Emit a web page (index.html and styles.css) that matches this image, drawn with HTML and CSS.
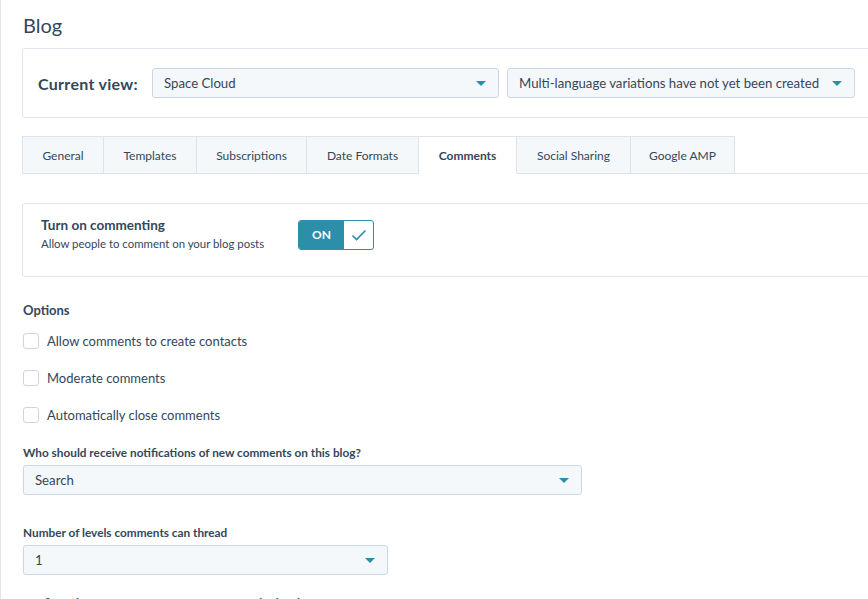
FILE: index.html
```html
<!DOCTYPE html>
<html lang="en">
<head>
    <meta charset="UTF-8">
    <title>Blog settings</title>
    <link rel="stylesheet" href="styles.css">
</head>
<body>
    <div class="page">
        <h1 class="title">Blog</h1>

        <div class="view-box">
            <span class="view-label">Current view:</span>
            <div class="select select-blog">Space Cloud <span class="caret"></span></div>
            <div class="select select-lang">Multi-language variations have not yet been created <span class="caret"></span></div>
        </div>

        <div class="tabs">
            <div class="tab">General</div>
            <div class="tab">Templates</div>
            <div class="tab">Subscriptions</div>
            <div class="tab">Date Formats</div>
            <div class="tab active">Comments</div>
            <div class="tab">Social Sharing</div>
            <div class="tab">Google AMP</div>
            <div class="tab-rest"></div>
        </div>

        <div class="card">
            <div class="card-text">
                <div class="card-title">Turn on commenting</div>
                <div class="card-desc">Allow people to comment on your blog posts</div>
            </div>
            <div class="toggle">
                <span class="toggle-on">ON</span>
                <span class="toggle-check">
                    <svg width="16" height="12" viewBox="0 0 16 12"><path d="M1.5 6.5 L5.5 10.5 L14.5 1.5" fill="none" stroke="#2d8eaa" stroke-width="1.6"/></svg>
                </span>
            </div>
        </div>

        <h3 class="section">Options</h3>
        <label class="check"><span class="box"></span>Allow comments to create contacts</label>
        <label class="check"><span class="box"></span>Moderate comments</label>
        <label class="check"><span class="box"></span>Automatically close comments</label>

        <div class="field">
            <div class="field-label">Who should receive notifications of new comments on this blog?</div>
            <div class="select select-search">Search <span class="caret"></span></div>
        </div>

        <div class="field">
            <div class="field-label">Number of levels comments can thread</div>
            <div class="select select-levels">1 <span class="caret"></span></div>
        </div>

        <div class="field">
            <div class="field-label">Confirmation message after comments are submitted</div>
        </div>
    </div>
</body>
</html>
```

FILE: styles.css
```css
body {
    margin: 0;
    font-family: Lato, "Open Sans", Arial, sans-serif;
    color: #33475b;
    background: #fff;
    overflow: hidden;
    border-left: 1px solid #e3e7ec;
    height: 599px;
}
.page {
    padding: 12px 0 0 21px;
    width: 900px;
}
.title {
    margin: 0 0 0 1px;
    font-size: 20px;
    font-weight: 400;
    line-height: 26px;
}
.view-box {
    margin-top: 10px;
    height: 68px;
    border: 1px solid #e1e6ec;
    border-radius: 3px;
    display: flex;
    align-items: center;
    padding-left: 15px;
}
.view-label {
    font-size: 16px;
    font-weight: 700;
    width: 114px;
    letter-spacing: 0.3px;
}
.select {
    position: relative;
    box-sizing: border-box;
    height: 30px;
    background: #f5f8fa;
    border: 1px solid #cbd6e2;
    border-radius: 3px;
    font-size: 13.2px;
    line-height: 28px;
    padding-left: 11px;
    white-space: nowrap;
}
.caret {
    position: absolute;
    right: 12px;
    top: 12px;
    border-left: 5px solid transparent;
    border-right: 5px solid transparent;
    border-top: 5px solid #2d8eaa;
}
.select-blog {
    width: 347px;
}
.select-lang {
    width: 348px;
    margin-left: 8px;
}
.tabs {
    display: flex;
    margin-top: 18px;
    height: 38px;
}
.tab {
    box-sizing: border-box;
    height: 38px;
    background: #f5f8fa;
    border: 1px solid #dfe3eb;
    border-left: none;
    font-size: 12px;
    line-height: 37px;
    text-align: center;
    white-space: nowrap;
}
.tab:nth-child(1) { width: 82px; border-left: 1px solid #dfe3eb; }
.tab:nth-child(2) { width: 93px; }
.tab:nth-child(3) { width: 110px; }
.tab:nth-child(4) { width: 112px; }
.tab:nth-child(5) { width: 98px; }
.tab:nth-child(6) { width: 114px; }
.tab:nth-child(7) { width: 104px; }
.tab.active {
    background: #fff;
    border-bottom-color: #fff;
    font-weight: 700;
}
.tab-rest {
    flex: 1;
    border-bottom: 1px solid #dfe3eb;
}
.card {
    margin-top: 29px;
    border: 1px solid #e1e6ec;
    border-radius: 3px;
    display: flex;
    align-items: flex-start;
    padding: 12px 0 0 18px;
    box-sizing: border-box;
    height: 74px;
}
.card-title {
    font-size: 13.5px;
    font-weight: 700;
    line-height: 18px;
}
.card-desc {
    font-size: 11.4px;
    line-height: 16px;
    margin-top: 2px;
}
.card-text {
    width: 257px;
}
.toggle {
    display: flex;
    margin-top: 4px;
    height: 30px;
    width: 76px;
    box-sizing: border-box;
    border: 1px solid #2d8eaa;
    border-radius: 3px;
    overflow: hidden;
}
.toggle-on {
    width: 45px;
    background: #2d8eaa;
    color: #fff;
    font-size: 12px;
    font-weight: 700;
    text-align: center;
    line-height: 28px;
}
.toggle-check {
    flex: 1;
    display: flex;
    align-items: center;
    justify-content: center;
}
.section {
    margin: 24px 0 0 1px;
    font-size: 13px;
    font-weight: 700;
    line-height: 18px;
}
.check {
    display: flex;
    align-items: center;
    font-size: 13px;
    line-height: 20px;
    margin-top: 12px;
    margin-left: 1px;
}
.check + .check {
    margin-top: 17px;
}
.box {
    width: 14px;
    height: 14px;
    border: 1px solid #cbd6e2;
    border-radius: 3px;
    margin-right: 8px;
}
.field {
    margin-top: 20px;
    margin-left: 1px;
}
.field-label {
    font-size: 11.8px;
    font-weight: 700;
    line-height: 16px;
    margin-bottom: 4px;
}
.select-search {
    width: 559px;
}
.select-levels {
    width: 365px;
}
.field + .field {
    margin-top: 30px;
}
.field:last-child {
    margin-top: 20px;
}
```
